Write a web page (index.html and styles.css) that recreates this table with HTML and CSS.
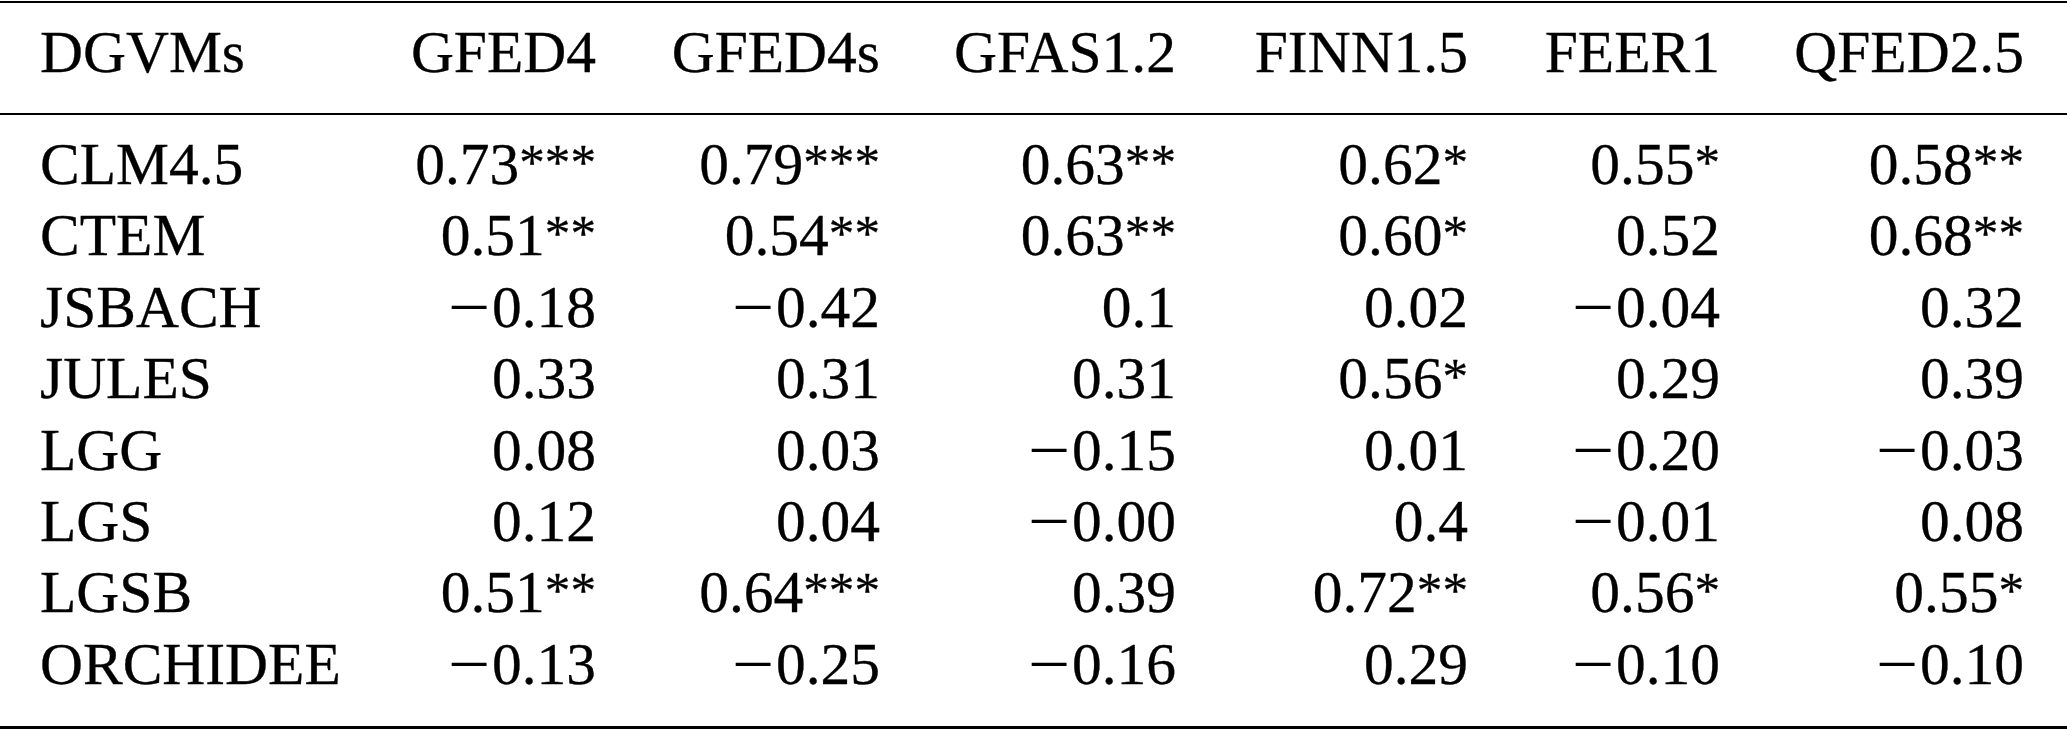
FILE: index.html
```html
<!DOCTYPE html>
<html lang="en">
<head>
<meta charset="utf-8">
<title>DGVMs correlation table</title>
<link rel="stylesheet" href="styles.css">
</head>
<body>
<div class="table">
  <div class="thead">
    <div class="row">
      <div class="c name">DGVMs</div>
      <div class="c">GFED4</div>
      <div class="c">GFED4s</div>
      <div class="c">GFAS1.2</div>
      <div class="c">FINN1.5</div>
      <div class="c">FEER1</div>
      <div class="c">QFED2.5</div>
    </div>
  </div>
  <div class="tbody">
    <div class="row">
      <div class="c name">CLM4.5</div>
      <div class="c">0.73<sup class="s">***</sup></div>
      <div class="c">0.79<sup class="s">***</sup></div>
      <div class="c">0.63<sup class="s">**</sup></div>
      <div class="c">0.62<sup class="s">*</sup></div>
      <div class="c">0.55<sup class="s">*</sup></div>
      <div class="c">0.58<sup class="s">**</sup></div>
    </div>
    <div class="row">
      <div class="c name">CTEM</div>
      <div class="c">0.51<sup class="s">**</sup></div>
      <div class="c">0.54<sup class="s">**</sup></div>
      <div class="c">0.63<sup class="s">**</sup></div>
      <div class="c">0.60<sup class="s">*</sup></div>
      <div class="c">0.52</div>
      <div class="c">0.68<sup class="s">**</sup></div>
    </div>
    <div class="row">
      <div class="c name">JSBACH</div>
      <div class="c"><span class="m">&minus;</span>0.18</div>
      <div class="c"><span class="m">&minus;</span>0.42</div>
      <div class="c">0.1</div>
      <div class="c">0.02</div>
      <div class="c"><span class="m">&minus;</span>0.04</div>
      <div class="c">0.32</div>
    </div>
    <div class="row">
      <div class="c name">JULES</div>
      <div class="c">0.33</div>
      <div class="c">0.31</div>
      <div class="c">0.31</div>
      <div class="c">0.56<sup class="s">*</sup></div>
      <div class="c">0.29</div>
      <div class="c">0.39</div>
    </div>
    <div class="row">
      <div class="c name">LGG</div>
      <div class="c">0.08</div>
      <div class="c">0.03</div>
      <div class="c"><span class="m">&minus;</span>0.15</div>
      <div class="c">0.01</div>
      <div class="c"><span class="m">&minus;</span>0.20</div>
      <div class="c"><span class="m">&minus;</span>0.03</div>
    </div>
    <div class="row">
      <div class="c name">LGS</div>
      <div class="c">0.12</div>
      <div class="c">0.04</div>
      <div class="c"><span class="m">&minus;</span>0.00</div>
      <div class="c">0.4</div>
      <div class="c"><span class="m">&minus;</span>0.01</div>
      <div class="c">0.08</div>
    </div>
    <div class="row">
      <div class="c name">LGSB</div>
      <div class="c">0.51<sup class="s">**</sup></div>
      <div class="c">0.64<sup class="s">***</sup></div>
      <div class="c">0.39</div>
      <div class="c">0.72<sup class="s">**</sup></div>
      <div class="c">0.56<sup class="s">*</sup></div>
      <div class="c">0.55<sup class="s">*</sup></div>
    </div>
    <div class="row">
      <div class="c name">ORCHIDEE</div>
      <div class="c"><span class="m">&minus;</span>0.13</div>
      <div class="c"><span class="m">&minus;</span>0.25</div>
      <div class="c"><span class="m">&minus;</span>0.16</div>
      <div class="c">0.29</div>
      <div class="c"><span class="m">&minus;</span>0.10</div>
      <div class="c"><span class="m">&minus;</span>0.10</div>
    </div>
  </div>
</div>
</body>
</html>
```

FILE: styles.css
```css
html, body {
  margin: 0;
  padding: 0;
  background: #fff;
}

body {
  font-family: "Liberation Serif", "Times New Roman", serif;
  color: #000;
  font-size: 59.5px;
  line-height: 71.4px;
  -webkit-text-stroke: 0.3px #000;
}

.table {
  width: 2067px;
  box-sizing: border-box;
  padding-top: 1px;
}

.thead {
  border-top: 2px solid #000;
  border-bottom: 2px solid #000;
  padding: 14.2px 0 24.3px;
}

.tbody {
  border-bottom: 3px solid #000;
  padding: 14.2px 0 26.3px;
}

.row {
  display: grid;
  grid-template-columns: 300px 256px 284px 296px 292px 252px 304px;
  padding: 0 43px 0 40px;
  height: 71.4px;
}

.c {
  text-align: right;
  white-space: nowrap;
}

.c.name {
  text-align: left;
}

.s {
  font-size: 0.86em;
  line-height: 0;
  vertical-align: 5px;
}

.m {
  display: inline-block;
  width: 0.778em;
  text-align: center;
  transform: scaleX(1.24);
}
```
